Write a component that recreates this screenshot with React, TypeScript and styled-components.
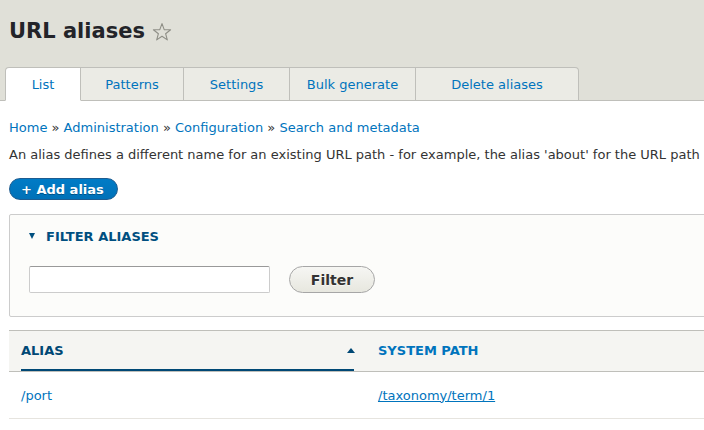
import React from 'react';
import styled, { createGlobalStyle } from 'styled-components';

const GlobalStyle = createGlobalStyle`
  html, body {
    margin: 0;
    padding: 0;
    background: #fff;
    overflow: hidden;
  }
  body {
    font-family: "DejaVu Sans", "Liberation Sans", sans-serif;
    font-size: 13px;
    color: #333;
  }
`;

const Page = styled.div`
  width: 1000px;
`;

const Header = styled.header`
  background: #e0e0d8;
  padding: 14px 0 0 5px;
  border-bottom: 1px solid #bfbfba;
`;

const TitleRow = styled.div`
  display: flex;
  align-items: center;
  gap: 7px;
  padding-left: 4px;
  height: 32px;
`;

const Title = styled.h1`
  margin: 0;
  font-size: 21px;
  font-weight: bold;
  color: #232429;
  line-height: 32px;
  padding-top: 2px;
`;

const Star = styled.svg`
  width: 20px;
  height: 20px;
  margin-top: 3px;
`;

const TabList = styled.ul`
  display: flex;
  list-style: none;
  margin: 21px 0 -1px 0;
  padding: 0;
`;

const Tab = styled.li<{ $active?: boolean; $first?: boolean; $last?: boolean; $w: number }>`
  width: ${p => p.$w}px;
  height: 34px;
  box-sizing: border-box;
  display: flex;
  align-items: center;
  justify-content: center;
  background: ${p => (p.$active ? '#fff' : '#ebebe5')};
  border: 1px solid #bfbfba;
  border-left-width: ${p => (p.$first ? '1px' : '0')};
  border-bottom-color: ${p => (p.$active ? '#fff' : '#bfbfba')};
  border-radius: ${p => (p.$first ? '4px 0 0 0' : p.$last ? '0 4px 0 0' : '0')};
  color: #0074bd;
  font-size: 13px;
  ${p => p.$active && 'position: relative; z-index: 1;'}
`;

const Content = styled.main`
  padding: 0 9px;
`;

const Breadcrumb = styled.nav`
  margin-top: 19px;
  line-height: 16px;
  color: #333;
  a {
    color: #0074bd;
    text-decoration: none;
  }
`;

const Description = styled.p`
  margin: 11px 0 0;
  line-height: 16px;
  white-space: nowrap;
`;

const PrimaryButton = styled.a`
  display: inline-flex;
  align-items: center;
  margin-top: 15px;
  height: 22px;
  box-sizing: border-box;
  padding: 0 13px 0 11px;
  border-radius: 20px;
  border: 1px solid #1e5c90;
  background: linear-gradient(to bottom, #007bc6, #0071b8);
  color: #fff;
  font-weight: bold;
  font-size: 13px;
  text-decoration: none;
  text-shadow: 0 1px 0 rgba(0, 0, 0, 0.3);
`;

const ButtonRow = styled.div``;

const Fieldset = styled.fieldset`
  margin: 14px 0 0;
  padding: 0 0 23px 19px;
  border: 1px solid #ccc;
  border-radius: 2px;
  background: #fcfcfa;
  min-width: 0;
`;

const Summary = styled.div`
  display: flex;
  align-items: center;
  gap: 11px;
  height: 42px;
  color: #004f80;
  font-weight: bold;
  font-size: 13px;
  text-transform: uppercase;
`;

const Caret = styled.span`
  width: 0;
  height: 0;
  border-left: 3.5px solid transparent;
  border-right: 3.5px solid transparent;
  border-top: 6px solid #004f80;
`;

const FilterRow = styled.div`
  display: flex;
  align-items: center;
  gap: 19px;
  margin-top: 9px;
`;

const TextInput = styled.input`
  width: 241px;
  height: 27px;
  box-sizing: border-box;
  border: 1px solid #ccc;
  border-top-color: #999;
  border-radius: 2px;
  background: #fff;
  font-family: inherit;
`;

const SecondaryButton = styled.button`
  width: 86px;
  height: 27px;
  box-sizing: border-box;
  border: 1px solid #a6a6a6;
  border-radius: 20px;
  background: linear-gradient(to bottom, #f6f6f3, #e7e7df);
  color: #333;
  font-family: inherit;
  font-weight: bold;
  font-size: 14px;
  text-shadow: 0 1px hsla(0, 0%, 100%, 0.6);
`;

const Table = styled.table`
  margin-top: 13px;
  width: 100%;
  border-collapse: collapse;
  border-top: 1px solid #bfbfba;
`;

const HeadCell = styled.th<{ $active?: boolean; $w?: number }>`
  ${p => (p.$w ? `width: ${p.$w}px;` : '')}
  box-sizing: border-box;
  height: 40px;
  padding: 0 12px;
  background: #f5f5f2;
  border-bottom: 1px solid #bfbfba;
  text-align: left;
  font-size: 13px;
  font-weight: bold;
  text-transform: uppercase;
  color: ${p => (p.$active ? '#004875' : '#0074bd')};
  vertical-align: middle;
`;

const HeadInner = styled.div<{ $active?: boolean }>`
  display: flex;
  align-items: center;
  justify-content: space-between;
  height: 40px;
  box-sizing: border-box;
  padding-top: 1px;
  border-bottom: 2px solid ${p => (p.$active ? '#004875' : 'transparent')};
`;

const SortArrow = styled.span`
  width: 0;
  height: 0;
  border-left: 4px solid transparent;
  border-right: 4px solid transparent;
  border-bottom: 5px solid #004875;
  margin-right: -1px;
`;

const Cell = styled.td`
  height: 46px;
  padding: 0 12px;
  border-bottom: 1px solid #e6e4df;
  vertical-align: middle;
`;

const Link = styled.a<{ $underline?: boolean }>`
  color: #0074bd;
  text-decoration: ${p => (p.$underline ? 'underline' : 'none')};
`;

const tabs = [
  { label: 'List', w: 76, active: true },
  { label: 'Patterns', w: 103 },
  { label: 'Settings', w: 106 },
  { label: 'Bulk generate', w: 126 },
  { label: 'Delete aliases', w: 163 },
];

export default function App() {
  return (
    <Page>
      <GlobalStyle />
      <Header>
        <TitleRow>
          <Title>URL aliases</Title>
          <Star viewBox="0 0 20 20">
            <path
              d="M10 1.6 L12.2 7.6 L18.6 7.8 L13.6 11.7 L15.3 17.9 L10 14.3 L4.7 17.9 L6.4 11.7 L1.4 7.8 L7.8 7.6 Z"
              fill="none"
              stroke="#8e8e86"
              strokeWidth="1.1"
              strokeLinejoin="round"
            />
          </Star>
        </TitleRow>
        <TabList>
          {tabs.map((t, i) => (
            <Tab key={t.label} $w={t.w} $active={t.active} $first={i === 0} $last={i === tabs.length - 1}>
              {t.label}
            </Tab>
          ))}
        </TabList>
      </Header>
      <Content>
        <Breadcrumb>
          <a href="#">Home</a> » <a href="#">Administration</a> » <a href="#">Configuration</a> »{' '}
          <a href="#">Search and metadata</a>
        </Breadcrumb>
        <Description>
          An alias defines a different name for an existing URL path - for example, the alias 'about' for the URL path
        </Description>
        <ButtonRow>
          <PrimaryButton href="#">+ Add alias</PrimaryButton>
        </ButtonRow>
        <Fieldset>
          <Summary>
            <Caret />
            Filter aliases
          </Summary>
          <FilterRow>
            <TextInput type="text" />
            <SecondaryButton>Filter</SecondaryButton>
          </FilterRow>
        </Fieldset>
        <Table>
          <thead>
            <tr>
              <HeadCell $active $w={357}>
                <HeadInner $active>
                  Alias
                  <SortArrow />
                </HeadInner>
              </HeadCell>
              <HeadCell>
                <HeadInner>System path</HeadInner>
              </HeadCell>
            </tr>
          </thead>
          <tbody>
            <tr>
              <Cell>
                <Link href="#">/port</Link>
              </Cell>
              <Cell>
                <Link href="#" $underline>
                  /taxonomy/term/1
                </Link>
              </Cell>
            </tr>
          </tbody>
        </Table>
      </Content>
    </Page>
  );
}
